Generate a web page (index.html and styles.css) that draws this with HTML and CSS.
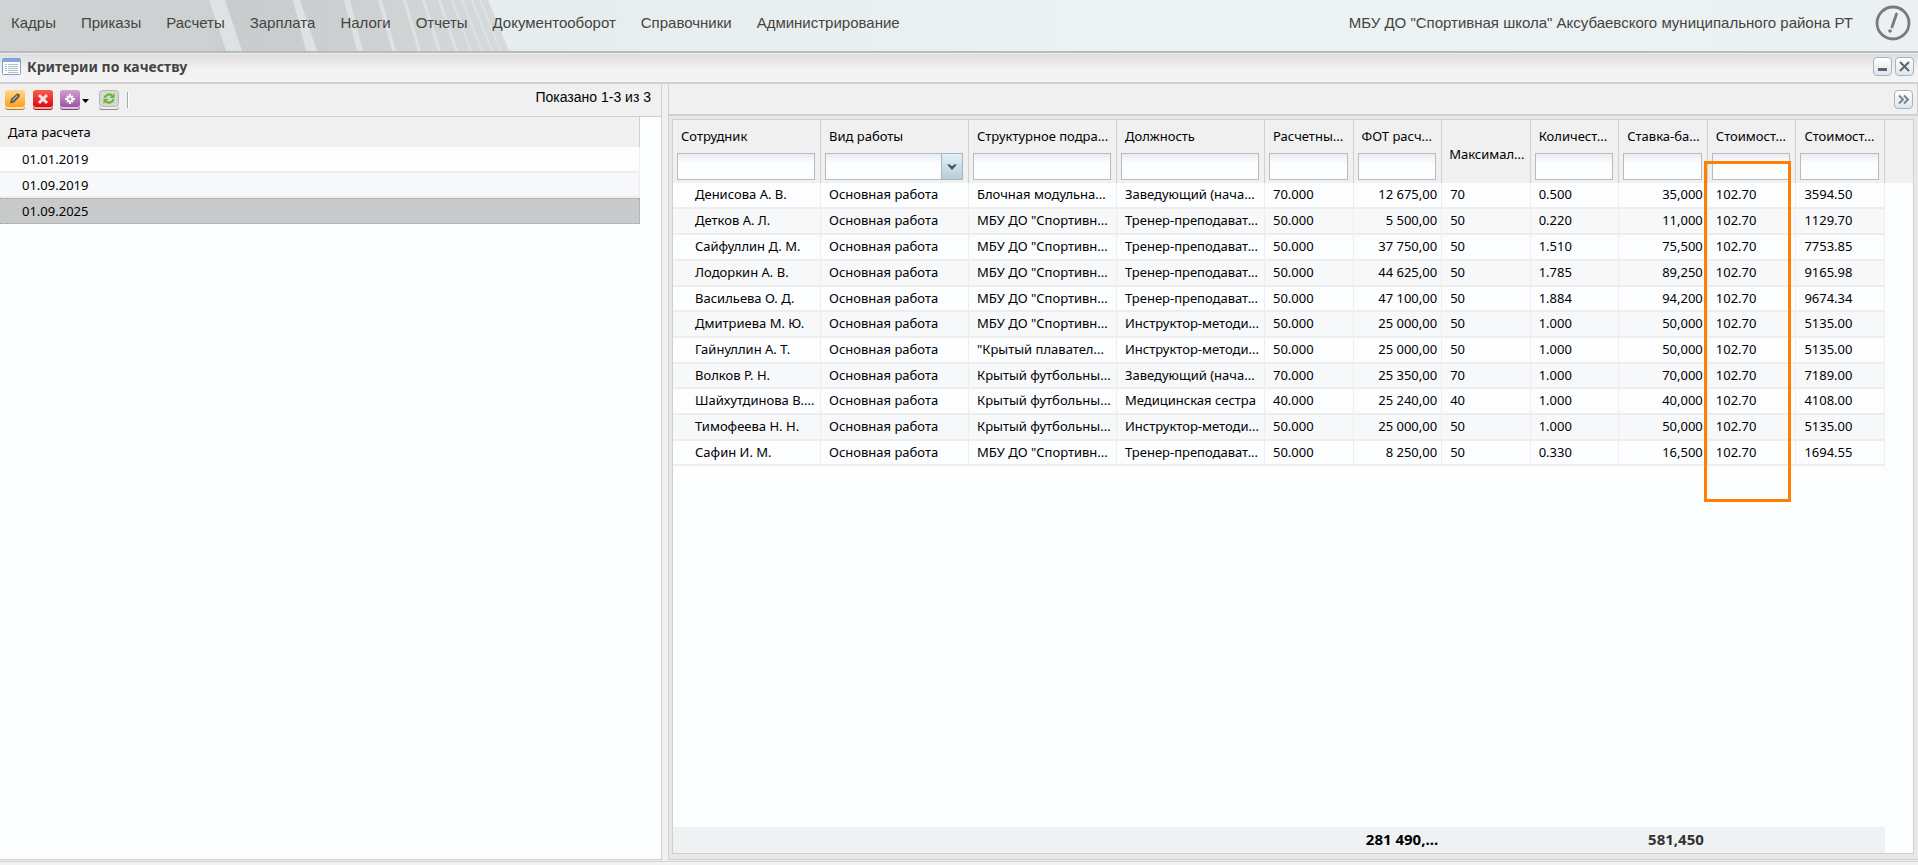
FILE: index.html
```
<!DOCTYPE html>
<html lang="ru">
<head>
    <meta charset="UTF-8">
    <title>Критерии по качеству</title>
    <link rel="stylesheet" href="styles.css">
</head>
<body>
    <header class="header">
        <svg class="header-bg" width="520" height="51" viewBox="0 0 520 51">
            <defs>
                <linearGradient id="bands" x1="0" x2="1" y1="0" y2="0">
                    <stop offset="0" stop-color="#cfd3d3"/>
                    <stop offset="0.4" stop-color="#cdd1d1"/>
                    <stop offset="0.45" stop-color="#c8cccc"/>
                    <stop offset="0.65" stop-color="#cbcfcf"/>
                    <stop offset="1" stop-color="#d6dada"/>
                </linearGradient>
            </defs>
            <path d="M0 0H488L509 51H0z" fill="url(#bands)"/>
            <g fill="#dde2e2">
                <path d="M209 0H225L242 51H226z"/>
                <path d="M293 0H300L317 51H306z"/>
                <path d="M344 0H350L363 51H357z"/>
                <path d="M378 0H382L396 51H392z"/>
                <path d="M403 0H406L421 51H418z"/>
                <path d="M422 0H425L441 51H438z"/>
                <path d="M438 0H441L458 51H455z"/>
                <path d="M451 0H453L472 51H470z"/>
                <path d="M461 0H463L483 51H481z"/>
                <path d="M471 0H473L493 51H491z"/>
                <path d="M479 0H481L502 51H500z"/>
            </g>
        </svg>
        <nav class="menu">
            <a href="#">Кадры</a>
            <a href="#">Приказы</a>
            <a href="#">Расчеты</a>
            <a href="#">Зарплата</a>
            <a href="#">Налоги</a>
            <a href="#">Отчеты</a>
            <a href="#">Документооборот</a>
            <a href="#">Справочники</a>
            <a href="#">Администрирование</a>
        </nav>
        <div class="org">МБУ ДО "Спортивная школа" Аксубаевского муниципального района РТ</div>
        <button class="alert" aria-label="Уведомления">
            <svg width="36" height="36" viewBox="0 0 36 36">
                <circle cx="18" cy="18" r="16" fill="none" stroke="#777b7e" stroke-width="2.8"/>
                <path d="M21.5 9L17 22" stroke="#777b7e" stroke-width="2.8" stroke-linecap="round"/>
                <circle cx="15" cy="26" r="1.8" fill="#777b7e"/>
            </svg>
        </button>
    </header>

    <div class="titlebar">
        <svg width="19" height="17" viewBox="0 0 19 17">
            <rect x="0.5" y="0.5" width="18" height="16" rx="1" fill="#fbfcfe" stroke="#7d9fd0"/>
            <path d="M1 1H18V4H1z" fill="#7fa8e0"/>
            <path d="M3 6.5H5M3 8.5H5M3 10.5H5M3 12.5H5" stroke="#8fd0f0"/>
            <path d="M6 6.5H16M6 8.5H16M6 10.5H16M6 12.5H16M6 14.5H16" stroke="#b9bcc0"/>
        </svg>
        <h1>Критерии по качеству</h1>
        <button class="tool" aria-label="Свернуть">
            <svg width="17" height="17" viewBox="0 0 17 17"><path d="M4 11.5H13" stroke="#5c6670" stroke-width="3"/></svg>
        </button>
        <button class="tool" aria-label="Закрыть">
            <svg width="17" height="17" viewBox="0 0 17 17"><path d="M4 4L13 13M13 4L4 13" stroke="#5c6670" stroke-width="2"/></svg>
        </button>
    </div>

    <main class="content">
        <section class="left">
            <div class="toolbar">
                <button class="btn" aria-label="Редактировать">
                    <svg width="20" height="20" viewBox="0 0 20 20">
                        <defs>
                            <linearGradient id="orange" x1="0" x2="0" y1="0" y2="1"><stop offset="0" stop-color="#ffd98c"/><stop offset="1" stop-color="#fda01c"/></linearGradient>
                        </defs>
                        <rect y="1" width="20" height="19" rx="3" fill="#b9762c"/>
                        <rect y="1" width="20" height="18" rx="3" fill="#ffe2b0"/>
                        <rect width="20" height="17" rx="3" fill="url(#orange)"/>
                        <path d="M5 13.500L6 9L12 3.500L15 4.500L14.500 7L9 12.500z" fill="#5e5a50"/>
                        <path d="M7.500 10.500L12.500 5.500" stroke="#b5b0a0" stroke-width="1.200"/>
                    </svg>
                </button>
                <button class="btn" aria-label="Удалить">
                    <svg width="20" height="20" viewBox="0 0 20 20">
                        <defs>
                            <linearGradient id="red" x1="0" x2="0" y1="0" y2="1"><stop offset="0" stop-color="#ff5a4a"/><stop offset="1" stop-color="#d80c10"/></linearGradient>
                        </defs>
                        <rect y="1" width="20" height="19" rx="3" fill="#9c1a1a"/>
                        <rect y="1" width="20" height="18" rx="3" fill="#f7a8a0"/>
                        <rect width="20" height="17" rx="3" fill="url(#red)"/>
                        <path d="M6 5L14 13M14 5L6 13" stroke="#f0e2e2" stroke-width="3"/>
                    </svg>
                </button>
                <button class="btn btn-menu" aria-label="Действия">
                    <svg width="30" height="20" viewBox="0 0 30 20">
                        <defs>
                            <linearGradient id="purple" x1="0" x2="0" y1="0" y2="1"><stop offset="0" stop-color="#cfa0d2"/><stop offset="1" stop-color="#98589e"/></linearGradient>
                        </defs>
                        <rect y="1" width="20" height="19" rx="3" fill="#6f4a78"/>
                        <rect y="1" width="20" height="18" rx="3" fill="#dcc0e0"/>
                        <rect width="20" height="17" rx="3" fill="url(#purple)"/>
                        <path d="M10 4V14M5 9H15M7 6L13 12M13 6L7 12" stroke="#fbf4fc" stroke-width="2.200"/>
                        <circle cx="10" cy="9" r="1.500" fill="#b98abf"/>
                        <path d="M22 9H29L25.500 13z" fill="#000"/>
                    </svg>
                </button>
                <button class="btn" aria-label="Обновить">
                    <svg width="20" height="20" viewBox="0 0 20 20">
                        <rect y="1" width="20" height="19" rx="3" fill="#8a8a8a"/>
                        <rect y="1" width="20" height="18" rx="3" fill="#f0f0f0"/>
                        <rect x="0.5" y="0.5" width="19" height="16" rx="3" fill="#d6d8d6" stroke="#b4b6b4"/>
                        <path d="M5.500 8C6.500 4.500 10.500 3.500 13 5.500M14.500 9C13.500 13 9.500 13.500 7 11.700" fill="none" stroke="#68b82e" stroke-width="2.200"/>
                        <path d="M15.500 3V8H10.500zM4.500 14V9H9.500z" fill="#68b82e"/>
                    </svg>
                </button>
                <span class="sep"></span>
                <span class="shown">Показано 1-3 из 3</span>
            </div>
            <table class="dates">
                <thead>
                    <tr><th>Дата расчета</th></tr>
                </thead>
                <tbody>
                    <tr><td>01.01.2019</td></tr>
                    <tr><td>01.09.2019</td></tr>
                    <tr class="selected"><td>01.09.2025</td></tr>
                </tbody>
            </table>
        </section>

        <section class="right">
            <div class="right-bar">
                <button class="tool" aria-label="Развернуть">
                    <svg width="17" height="17" viewBox="0 0 17 17"><path d="M4 4.500L8 8.500L4 12.500M9 4.500L13 8.500L9 12.500" fill="none" stroke="#7a828a" stroke-width="2"/></svg>
                </button>
            </div>
            <div class="grid-wrap">
                <table class="grid">
                    <colgroup>
                        <col class="wide"><col class="wide"><col class="wide"><col class="wide">
                        <col><col><col><col><col><col><col>
                        <col class="gutter">
                    </colgroup>
                    <thead>
                        <tr>
                            <th><label for="f1">Сотрудник</label><input type="text" id="f1"></th>
                            <th>
                                <label for="f2">Вид работы</label>
                                <span class="combo">
                                    <select id="f2"><option></option><option>Основная работа</option></select>
                                    <span class="trigger"><svg width="12" height="8" viewBox="0 0 12 8"><path d="M1 1.500H4L6 3.500L8 1.500H11L6 7z" fill="#3f5560"/></svg></span>
                                </span>
                            </th>
                            <th><label for="f3">Структурное подра...</label><input type="text" id="f3"></th>
                            <th><label for="f4">Должность</label><input type="text" id="f4"></th>
                            <th><label for="f5">Расчетны...</label><input type="text" id="f5"></th>
                            <th><label for="f6">ФОТ расч...</label><input type="text" id="f6"></th>
                            <th class="middle">Максимал...</th>
                            <th><label for="f7">Количест...</label><input type="text" id="f7"></th>
                            <th><label for="f8">Ставка-ба...</label><input type="text" id="f8"></th>
                            <th class="marked"><label for="f9">Стоимост...</label><input type="text" id="f9"><span class="marker"></span></th>
                            <th><label for="f10">Стоимост...</label><input type="text" id="f10"></th>
                            <th class="gutter"></th>
                        </tr>
                    </thead>
                    <tbody>
                        <tr><td>Денисова А. В.</td><td>Основная работа</td><td>Блочная модульна...</td><td>Заведующий (нача...</td><td>70.000</td><td class="num">12 675,00</td><td>70</td><td>0.500</td><td class="num">35,000</td><td>102.70</td><td>3594.50</td></tr>
                        <tr><td>Детков А. Л.</td><td>Основная работа</td><td>МБУ ДО "Спортивн...</td><td>Тренер-преподават...</td><td>50.000</td><td class="num">5 500,00</td><td>50</td><td>0.220</td><td class="num">11,000</td><td>102.70</td><td>1129.70</td></tr>
                        <tr><td>Сайфуллин Д. М.</td><td>Основная работа</td><td>МБУ ДО "Спортивн...</td><td>Тренер-преподават...</td><td>50.000</td><td class="num">37 750,00</td><td>50</td><td>1.510</td><td class="num">75,500</td><td>102.70</td><td>7753.85</td></tr>
                        <tr><td>Лодоркин А. В.</td><td>Основная работа</td><td>МБУ ДО "Спортивн...</td><td>Тренер-преподават...</td><td>50.000</td><td class="num">44 625,00</td><td>50</td><td>1.785</td><td class="num">89,250</td><td>102.70</td><td>9165.98</td></tr>
                        <tr><td>Васильева О. Д.</td><td>Основная работа</td><td>МБУ ДО "Спортивн...</td><td>Тренер-преподават...</td><td>50.000</td><td class="num">47 100,00</td><td>50</td><td>1.884</td><td class="num">94,200</td><td>102.70</td><td>9674.34</td></tr>
                        <tr><td>Дмитриева М. Ю.</td><td>Основная работа</td><td>МБУ ДО "Спортивн...</td><td>Инструктор-методи...</td><td>50.000</td><td class="num">25 000,00</td><td>50</td><td>1.000</td><td class="num">50,000</td><td>102.70</td><td>5135.00</td></tr>
                        <tr><td>Гайнуллин А. Т.</td><td>Основная работа</td><td>"Крытый плавател...</td><td>Инструктор-методи...</td><td>50.000</td><td class="num">25 000,00</td><td>50</td><td>1.000</td><td class="num">50,000</td><td>102.70</td><td>5135.00</td></tr>
                        <tr><td>Волков Р. Н.</td><td>Основная работа</td><td>Крытый футбольны...</td><td>Заведующий (нача...</td><td>70.000</td><td class="num">25 350,00</td><td>70</td><td>1.000</td><td class="num">70,000</td><td>102.70</td><td>7189.00</td></tr>
                        <tr><td>Шайхутдинова В....</td><td>Основная работа</td><td>Крытый футбольны...</td><td>Медицинская сестра</td><td>40.000</td><td class="num">25 240,00</td><td>40</td><td>1.000</td><td class="num">40,000</td><td>102.70</td><td>4108.00</td></tr>
                        <tr><td>Тимофеева Н. Н.</td><td>Основная работа</td><td>Крытый футбольны...</td><td>Инструктор-методи...</td><td>50.000</td><td class="num">25 000,00</td><td>50</td><td>1.000</td><td class="num">50,000</td><td>102.70</td><td>5135.00</td></tr>
                        <tr><td>Сафин И. М.</td><td>Основная работа</td><td>МБУ ДО "Спортивн...</td><td>Тренер-преподават...</td><td>50.000</td><td class="num">8 250,00</td><td>50</td><td>0.330</td><td class="num">16,500</td><td>102.70</td><td>1694.55</td></tr>
                    </tbody>
                </table>
                <table class="grid summary">
                    <colgroup>
                        <col class="wide"><col class="wide"><col class="wide"><col class="wide">
                        <col><col><col><col><col><col><col>
                        <col class="gutter">
                    </colgroup>
                    <tbody>
                        <tr><td></td><td></td><td></td><td></td><td></td><td class="num">281 490,...</td><td></td><td></td><td class="num points">581,450</td><td></td><td></td></tr>
                    </tbody>
                </table>
            </div>
        </section>
    </main>
    <footer class="bottom"></footer>
</body>
</html>
```
FILE: styles.css
```
*{
    margin: 0;
    padding: 0;
    box-sizing: border-box;
}
body{
    height: 100vh;
    display: flex;
    flex-direction: column;
    overflow: hidden;
    background: #f0f0f0;
    font-family: "Noto Sans", "Open Sans", sans-serif;
    font-size: 13px;
    line-height: 18px;
    color: #000;
}
a{
    text-decoration: none;
    color: inherit;
}
button{
    border: none;
    background: none;
    cursor: pointer;
}
svg{
    display: block;
}
/* header */
.header{
    position: relative;
    display: flex;
    align-items: center;
    height: 53px;
    padding: 0 7px 6px 11px;
    background: linear-gradient(to right, #e6edec 500px, #edf2f2 1200px, #ebf0f0);
    border-bottom: 2px solid #b6bac2;
    font-family: "Liberation Sans", Arial, sans-serif;
    font-size: 15px;
    color: #444;
}
.header-bg{
    position: absolute;
    left: 0;
    top: 0;
}
.menu{
    position: relative;
    display: flex;
    flex: 1;
    gap: 25px;
}
.alert{
    margin-left: 22px;
}
/* window title */
.titlebar{
    display: flex;
    align-items: center;
    gap: 3px;
    height: 31px;
    padding: 0 4px 3px 2px;
    border-top: 1px solid #f0f0f0;
    border-bottom: 2px solid #d0d0d0;
    background: linear-gradient(#dedede, #f3f3f3 16px);
}
.titlebar h1{
    flex: 1;
    padding-left: 3px;
    font-size: 14px;
    color: #444;
}
.tool{
    width: 19px;
    height: 19px;
    border: 1px solid #a9b3bb;
    border-radius: 4px;
    background: linear-gradient(#fff, #dfe6ec);
}
.content{
    flex: 1;
    display: flex;
    gap: 6px;
    min-height: 0;
}
/* left panel */
.left{
    flex: 0 0 662px;
    background: #fcfdff;
    border-right: 1px solid #d0d0d0;
    border-bottom: 1px solid #d0d0d0;
}
.toolbar{
    display: flex;
    align-items: center;
    height: 33px;
    padding: 0 10px 0 5px;
    background: #f0f0f0;
    border-bottom: 1px solid #d0d0d0;
}
.btn{
    margin-right: 8px;
}
.btn-menu{
    margin: 0 9px 0 -1px;
}
.sep{
    width: 2px;
    height: 16px;
    border-left: 1px solid #98b0a8;
    border-right: 1px solid #fff;
}
.shown{
    flex: 1;
    padding-bottom: 6px;
    text-align: right;
    font-family: "Liberation Sans", Arial, sans-serif;
    font-size: 14px;
}
.dates{
    width: 100%;
    border-collapse: separate;
    border-spacing: 0;
    background: linear-gradient(#f0f0f0, #f0f0f0) no-repeat;
    background-size: 100% 30px;
    border-right: 21px solid transparent;
}
.dates th{
    height: 30px;
    padding: 0 0 1px 8px;
    text-align: left;
    font-weight: normal;
    border-right: 1px solid #d0d0d0;
}
.dates td{
    height: 26px;
    padding-left: 22px;
    background: #fcfdff;
    border-bottom: 2px solid #ededed;
    border-right: 1px solid #ededed;
}
.dates tr:nth-child(2) td{
    height: 25px;
    background: #f7f8fa;
}
.dates .selected td{
    background: #c8c9cb;
    border: 1px dotted #a0a0a0;
    border-left: none;
}
/* right panel */
.right{
    flex: 1;
    min-width: 0;
    display: flex;
    flex-direction: column;
    background: #e8e8e8;
    border-left: 1px solid #d0d0d0;
    border-bottom: 1px solid #d0d0d0;
}
.right-bar{
    display: flex;
    align-items: center;
    justify-content: flex-end;
    height: 32px;
    padding-right: 4px;
    background: #f0f0f0;
    border-right: 1px solid #d0d0d0;
    border-bottom: 2px solid #d0d0d0;
}
.grid-wrap{
    flex: 1;
    display: flex;
    flex-direction: column;
    margin: 3px 4px 5px 3px;
    background: #fcfdff;
    border: 1px solid #d0d0d0;
}
.grid{
    width: 100%;
    table-layout: fixed;
    border-collapse: separate;
    border-spacing: 0;
}
.grid .wide{
    width: 148px;
}
.grid .gutter{
    width: 28px;
}
.grid th{
    height: 63px;
    padding: 7px 5px 3px 4px;
    vertical-align: top;
    text-align: left;
    font-weight: normal;
    white-space: nowrap;
    background: #f0f0f0;
    border-right: 1px solid #d0d0d0;
}
.grid th.gutter{
    border-right: none;
}
.grid th.middle{
    padding-left: 7px;
    vertical-align: middle;
}
.grid label{
    display: block;
    height: 26px;
    padding-left: 4px;
}
.grid input, .grid select{
    display: block;
    width: 100%;
    height: 27px;
    padding: 0 4px;
    border: 1px solid #b8bcbe;
    border-radius: 0;
    background: linear-gradient(#e9eef2, #fcfdff 10px);
    font: inherit;
    appearance: none;
}
.combo{
    position: relative;
    display: block;
}
.trigger{
    position: absolute;
    top: 0;
    right: 0;
    display: flex;
    align-items: center;
    justify-content: center;
    width: 22px;
    height: 27px;
    border: 1px solid #a3b5c0;
    border-radius: 0 2px 2px 0;
    background: linear-gradient(#e2f0f8, #b9ccd8);
    pointer-events: none;
}
.marked{
    position: relative;
}
.marker{
    position: absolute;
    top: 41px;
    left: -4px;
    width: 100%;
    height: 341px;
    border: 3px solid #ff7f00;
    pointer-events: none;
}
.grid td{
    height: 26px;
    padding: 0 0 2px 8px;
    white-space: nowrap;
    background: #fcfdff;
    border-right: 1px solid #ededed;
    border-bottom: 2px solid #ededed;
}
.grid td:first-child{
    padding-left: 22px;
}
.grid tr:nth-child(even) td{
    background: #f7f8fa;
}
.grid tr:nth-child(3n+5) td{
    height: 25px;
}
.grid td.num{
    padding: 0 4px 2px 0;
    text-align: right;
}
.summary{
    margin-top: auto;
}
.summary td{
    border: none;
    background: #f0f1f3;
    font-size: 15px;
    font-weight: bold;
}
.summary .points{
    color: #333;
}
.bottom{
    height: 4px;
    margin-top: 1px;
    border-top: 1px solid #d0d0d0;
    background: #f3f3f3;
}
```
